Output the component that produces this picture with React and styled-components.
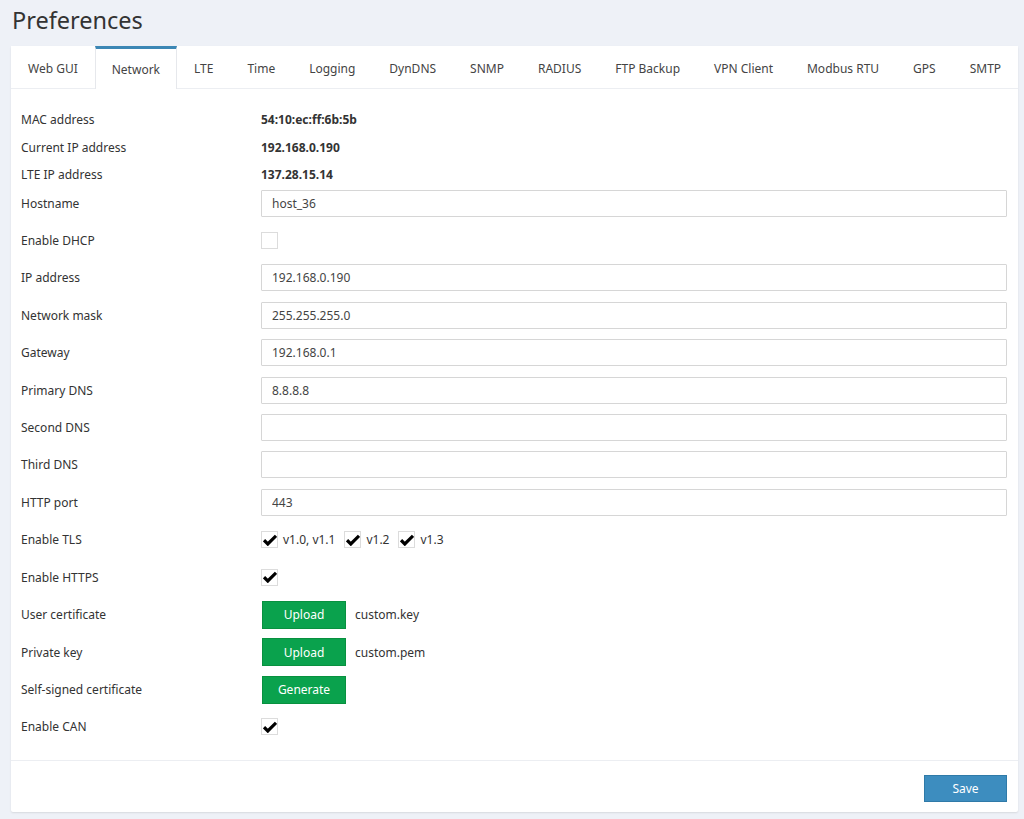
import React, { useState } from "react";
import styled, { createGlobalStyle } from "styled-components";

const GlobalStyle = createGlobalStyle`
  html, body {
    margin: 0;
    padding: 0;
    background: #eef1f7;
    font-family: "Noto Sans", "Open Sans", sans-serif;
    color: #333;
  }
`;

const tabs = [
  "Web GUI",
  "Network",
  "LTE",
  "Time",
  "Logging",
  "DynDNS",
  "SNMP",
  "RADIUS",
  "FTP Backup",
  "VPN Client",
  "Modbus RTU",
  "GPS",
  "SMTP",
];

const CheckMark = () => (
  <svg width="14" height="12" viewBox="0 0 14 12">
    <path d="M1 6.2 L4.8 10 L13 1.8" fill="none" stroke="#000" strokeWidth="3.2" strokeLinejoin="miter" />
  </svg>
);

export default function App() {
  const [active, setActive] = useState("Network");

  return (
    <>
      <GlobalStyle />
      <Page>
        <Title>Preferences</Title>
        <Panel>
          <TabBar>
            {tabs.map((t) => (
              <Tab key={t} $active={t === active} onClick={() => setActive(t)}>
                {t}
              </Tab>
            ))}
          </TabBar>

          <Form>
            <InfoRow>
              <Label>MAC address</Label>
              <Value>54:10:ec:ff:6b:5b</Value>
            </InfoRow>
            <InfoRow>
              <Label>Current IP address</Label>
              <Value>192.168.0.190</Value>
            </InfoRow>
            <InfoRow>
              <Label>LTE IP address</Label>
              <Value>137.28.15.14</Value>
            </InfoRow>

            <FieldRow>
              <Label>Hostname</Label>
              <Input defaultValue="host_36" />
            </FieldRow>
            <FieldRow>
              <Label>Enable DHCP</Label>
              <Check />
            </FieldRow>
            <FieldRow>
              <Label>IP address</Label>
              <Input defaultValue="192.168.0.190" />
            </FieldRow>
            <FieldRow>
              <Label>Network mask</Label>
              <Input defaultValue="255.255.255.0" />
            </FieldRow>
            <FieldRow>
              <Label>Gateway</Label>
              <Input defaultValue="192.168.0.1" />
            </FieldRow>
            <FieldRow>
              <Label>Primary DNS</Label>
              <Input defaultValue="8.8.8.8" />
            </FieldRow>
            <FieldRow>
              <Label>Second DNS</Label>
              <Input defaultValue="" />
            </FieldRow>
            <FieldRow>
              <Label>Third DNS</Label>
              <Input defaultValue="" />
            </FieldRow>
            <FieldRow>
              <Label>HTTP port</Label>
              <Input defaultValue="443" />
            </FieldRow>
            <FieldRow>
              <Label>Enable TLS</Label>
              <Inline>
                <CheckLabel>
                  <Check><CheckMark /></Check>
                  v1.0, v1.1
                </CheckLabel>
                <CheckLabel>
                  <Check><CheckMark /></Check>
                  v1.2
                </CheckLabel>
                <CheckLabel>
                  <Check><CheckMark /></Check>
                  v1.3
                </CheckLabel>
              </Inline>
            </FieldRow>
            <FieldRow>
              <Label>Enable HTTPS</Label>
              <Check><CheckMark /></Check>
            </FieldRow>
            <FieldRow>
              <Label>User certificate</Label>
              <Inline>
                <GreenButton>Upload</GreenButton>
                <FileName>custom.key</FileName>
              </Inline>
            </FieldRow>
            <FieldRow>
              <Label>Private key</Label>
              <Inline>
                <GreenButton>Upload</GreenButton>
                <FileName>custom.pem</FileName>
              </Inline>
            </FieldRow>
            <FieldRow>
              <Label>Self-signed certificate</Label>
              <Inline>
                <GreenButton>Generate</GreenButton>
              </Inline>
            </FieldRow>
            <FieldRow>
              <Label>Enable CAN</Label>
              <Check><CheckMark /></Check>
            </FieldRow>
          </Form>

          <Footer>
            <SaveButton>Save</SaveButton>
          </Footer>
        </Panel>
      </Page>
    </>
  );
}

const Page = styled.div`
  padding: 0 6px 7px 11px;
`;

const Title = styled.h1`
  margin: 0;
  height: 46px;
  line-height: 40px;
  padding-left: 1px;
  font-size: 23.5px;
  font-weight: 400;
  color: #333;
`;

const Panel = styled.div`
  background: #fff;
  border-radius: 2px;
  box-shadow: 0 1px 2px rgba(0, 0, 0, 0.1);
`;

const TabBar = styled.div`
  display: flex;
  height: 42px;
  border-bottom: 1px solid #eceef2;
`;

const Tab = styled.div`
  flex: 1 1 auto;
  display: flex;
  align-items: center;
  justify-content: center;
  padding: 0 12px;
  font-size: 12px;
  color: #444;
  cursor: pointer;
  box-sizing: border-box;
  border-top: 3px solid ${(p) => (p.$active ? "#3c87b5" : "transparent")};
  border-left: 1px solid ${(p) => (p.$active ? "#e6e8ec" : "transparent")};
  border-right: 1px solid ${(p) => (p.$active ? "#e6e8ec" : "transparent")};
  margin-bottom: ${(p) => (p.$active ? "-1px" : "0")};
  background: #fff;
  white-space: nowrap;
`;

const Form = styled.div`
  display: flex;
  flex-direction: column;
  padding: 17px 11px 20px 10px;
`;

const InfoRow = styled.div`
  display: grid;
  grid-template-columns: 240px 1fr;
  align-items: center;
  height: 27.5px;
`;

const FieldRow = styled.div`
  display: grid;
  grid-template-columns: 240px 1fr;
  align-items: center;
  height: 27.4px;
  margin-top: 10px;
  ${InfoRow} + & {
    margin-top: 1px;
  }
`;

const Label = styled.div`
  font-size: 12px;
  color: #333;
`;

const Value = styled.div`
  font-size: 12px;
  font-weight: 700;
  color: #333;
`;

const Input = styled.input`
  box-sizing: border-box;
  width: 100%;
  height: 27px;
  border: 1px solid #d6d6d6;
  border-radius: 1px;
  padding: 0 10px;
  font-family: inherit;
  font-size: 12px;
  color: #444;
  outline: none;
`;

const Check = styled.span`
  box-sizing: border-box;
  width: 17px;
  height: 17px;
  border: 1px solid #dcdcdc;
  display: inline-flex;
  align-items: center;
  justify-content: center;
  background: #fff;
`;

const Inline = styled.div`
  display: flex;
  align-items: center;
  gap: 9px;
`;

const CheckLabel = styled.label`
  display: inline-flex;
  align-items: center;
  gap: 5px;
  font-size: 12px;
  color: #333;
`;

const GreenButton = styled.button`
  box-sizing: border-box;
  width: 84px;
  height: 28px;
  margin-left: 1px;
  background: #0aa24d;
  border: 1px solid #08913f;
  color: #fff;
  font-family: inherit;
  font-size: 12px;
  cursor: pointer;
`;

const FileName = styled.span`
  font-size: 12px;
  color: #333;
`;

const Footer = styled.div`
  display: flex;
  justify-content: flex-end;
  border-top: 1px solid #eceef2;
  padding: 14px 11px 10px;
`;

const SaveButton = styled.button`
  box-sizing: border-box;
  width: 83px;
  height: 27px;
  background: #3d8dbf;
  border: 1px solid #2f7aa8;
  color: #fff;
  font-family: inherit;
  font-size: 12px;
  cursor: pointer;
`;
